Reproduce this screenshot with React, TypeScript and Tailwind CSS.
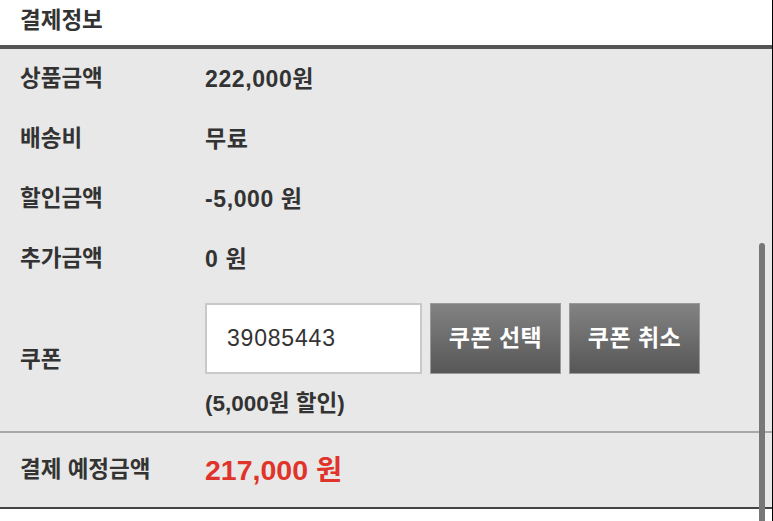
export default function App() {
  const rows = [
    { label: '상품금액', value: '222,000원' },
    { label: '배송비', value: '무료' },
    { label: '할인금액', value: '-5,000 원' },
    { label: '추가금액', value: '0 원' },
  ]

  return (
    <div
      className="relative w-[773px] h-[521px] overflow-hidden bg-white border-r border-black text-[#333]"
      style={{ fontFamily: '"Liberation Sans", "Noto Sans CJK KR", sans-serif' }}
    >
      {/* 헤더 */}
      <div className="h-[45px] px-5 pb-1 flex items-center text-[22.5px] font-semibold">결제정보</div>

      <div className="border-t-4 border-[#555] bg-[#e8e8e8]">
        {rows.map((r) => (
          <div key={r.label} className="h-[60px] flex items-center text-[22.5px] font-semibold">
            <div className="w-[205px] pl-5">{r.label}</div>
            <div className="text-[23px] tracking-[0.6px]">{r.value}</div>
          </div>
        ))}

        {/* 쿠폰 */}
        <div className="flex items-center h-[142px]">
          <div className="w-[205px] pl-5 text-[22.5px] font-semibold">쿠폰</div>
          <div className="flex flex-col pt-1">
            <div className="flex gap-2">
              <div className="w-[217px] h-[71px] bg-white border-2 border-[#c9c9c9] flex items-center pl-5 text-[23px] tracking-[0.8px]">
                39085443
              </div>
              <button className="w-[131px] h-[71px] border border-[#9a9a9a] bg-gradient-to-b from-[#838383] to-[#575757] text-white text-[23px] font-semibold tracking-[0.5px]">
                쿠폰 선택
              </button>
              <button className="w-[131px] h-[71px] border border-[#9a9a9a] bg-gradient-to-b from-[#838383] to-[#575757] text-white text-[23px] font-semibold tracking-[0.5px]">
                쿠폰 취소
              </button>
            </div>
            <div className="mt-[13px] text-[22.5px] font-semibold">(5,000원 할인)</div>
          </div>
        </div>

        {/* 결제 예정금액 */}
        <div className="border-t-2 border-[#a8a8a8] h-[78px] flex items-center border-b-2 border-b-[#444]">
          <div className="w-[205px] pl-5 text-[22.5px] font-semibold">결제 예정금액</div>
          <div className="text-[28.5px] font-bold text-[#e0342b]">217,000 원</div>
        </div>
      </div>

      {/* 스크롤바 */}
      <div className="absolute left-[759px] top-[243px] w-[6px] h-[300px] rounded-full bg-[#777]" />
    </div>
  )
}
